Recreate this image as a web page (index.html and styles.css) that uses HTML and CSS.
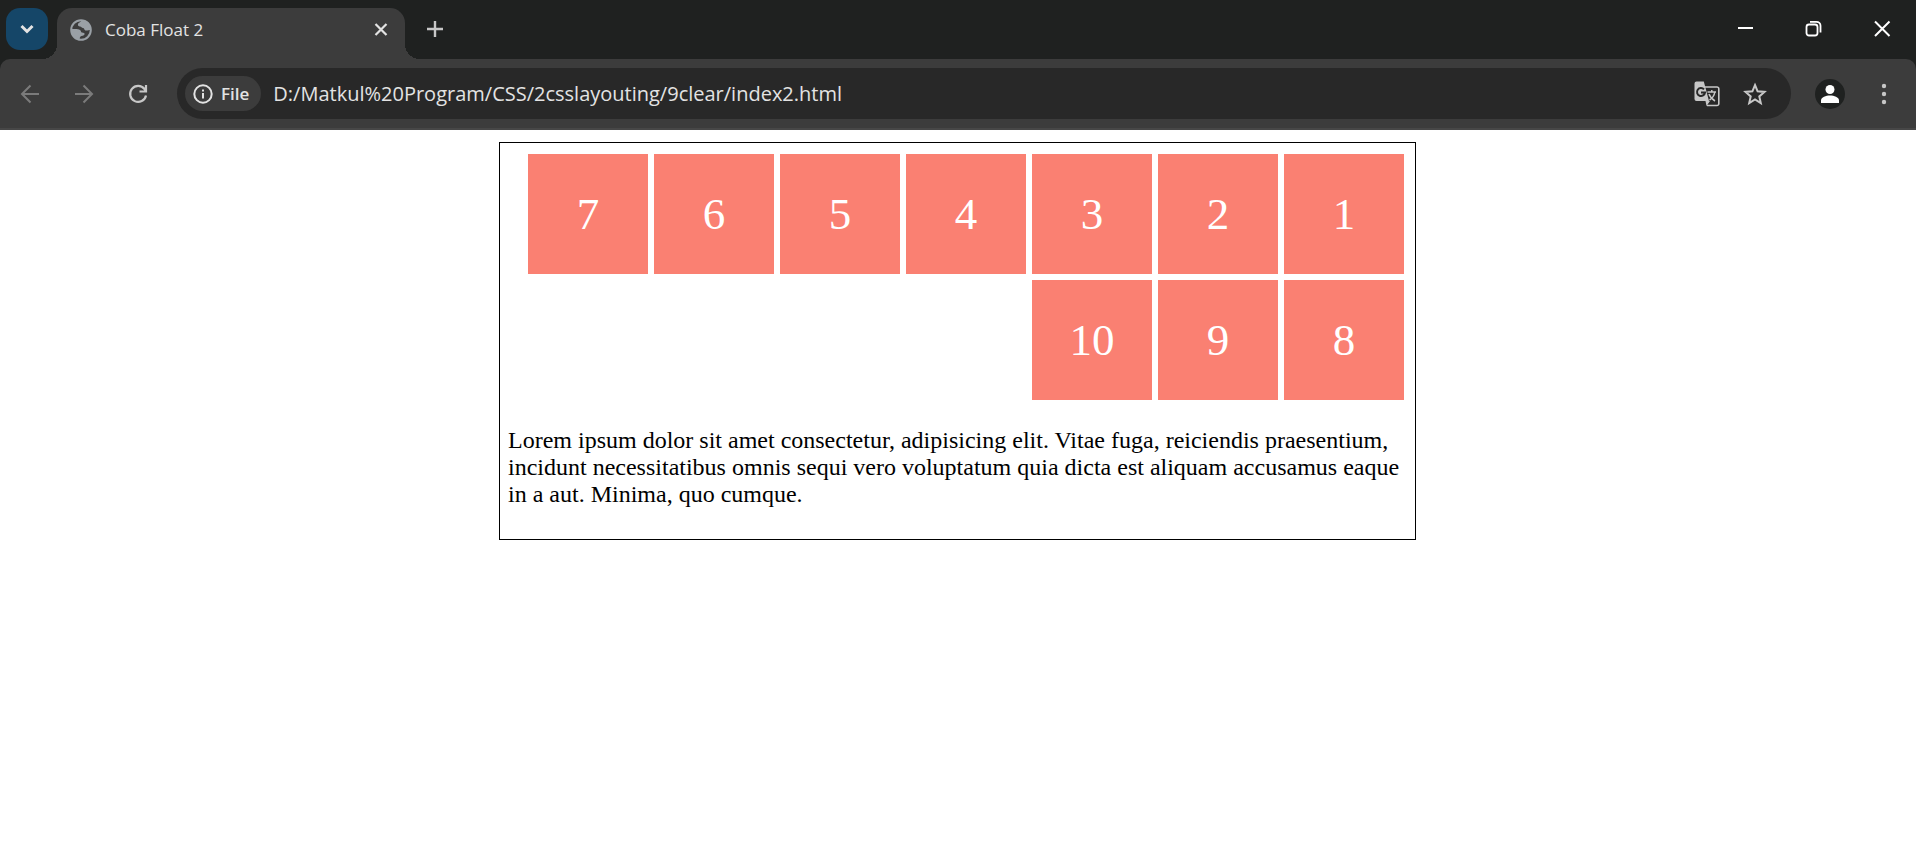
FILE: index.html
```
<!DOCTYPE html>
<html lang="en">
<head>
<meta charset="utf-8">
<title>Coba Float 2</title>
<link rel="stylesheet" href="styles.css">
</head>
<body>
<header class="browser">
  <div class="tabstrip">
    <button class="tab-search" aria-label="Search tabs">
      <svg width="42" height="42" viewBox="0 0 42 42" fill="none" stroke="#e3e3e3" stroke-width="3"><path d="M15.500 18l5.500 5.500 5.500-5.500"/></svg>
    </button>
    <div class="tab">
      <svg class="favicon" width="22" height="22" viewBox="0 0 22 22"><circle cx="11" cy="11" r="9.800" fill="none" stroke="#9aa0a6" stroke-width="2"/><path fill="#9aa0a6" d="M12 1C11 3 8.500 3.500 8 5s.5 2.500 2 2.500 1.500 1.500 3 1.500 1 2.500 3 2.500 3-.5 5-.5C21 5 17 1 12 1zM1 10c3 .3 7-.5 9 1 1.500 1.200.5 2.200 2 2.500s3 .5 2.500 2-3 1-4 2-.5 2-1 3C4 20 1 16 1 10z"/></svg>
      <span class="tab-title">Coba Float 2</span>
      <button class="icon-button tab-close" aria-label="Close tab">
        <svg width="20" height="20" viewBox="0 0 20 20" stroke="#e3e3e3" stroke-width="2.200"><path d="M4.500 4l11 11m0-11l-11 11"/></svg>
      </button>
    </div>
    <button class="icon-button new-tab" aria-label="New tab">
      <svg width="20" height="20" viewBox="0 0 20 20" stroke="#c7c7c7" stroke-width="2.400"><path d="M2 11h16M10 3v16"/></svg>
    </button>
    <div class="window-controls">
      <button class="icon-button" aria-label="Minimize"><svg width="20" height="20" viewBox="0 0 20 20" stroke="#fff" stroke-width="2"><path d="M2 10h15"/></svg></button>
      <button class="icon-button" aria-label="Restore"><svg width="20" height="20" viewBox="0 0 20 20" fill="none" stroke="#fff" stroke-width="1.800"><rect x="2.500" y="6.500" width="11" height="11" rx="2.500"/><path d="M6 3.800h6.500a4 4 0 0 1 4 4V14.500"/></svg></button>
      <button class="icon-button" aria-label="Close"><svg width="20" height="20" viewBox="0 0 20 20" stroke="#fff" stroke-width="2"><path d="M3 3.500l14.500 14.500m0-14.500l-14.500 14.500"/></svg></button>
    </div>
  </div>
  <div class="toolbar">
    <nav class="navigation" aria-label="Navigation">
      <button class="icon-button" aria-label="Back"><svg width="24" height="24" viewBox="0 0 24 24" fill="none" stroke="#7b7b7b" stroke-width="2"><path d="M21 12H4.500M12.500 3.500L4 12l8.500 8.500"/></svg></button>
      <button class="icon-button" aria-label="Forward"><svg width="24" height="24" viewBox="0 0 24 24" fill="none" stroke="#7b7b7b" stroke-width="2"><path d="M3 12h16.500M11.500 3.500L20 12l-8.500 8.500"/></svg></button>
      <button class="icon-button" aria-label="Reload"><svg width="24" height="24" viewBox="0 0 24 24" fill="none" stroke="#c7c7c7" stroke-width="2.200"><path d="M20 13.500A8 8 0 1 1 18.500 7l1.500 2M20 3v6.500h-6.500"/></svg></button>
    </nav>
    <div class="omnibox">
      <button class="site-chip">
        <svg width="20" height="20" viewBox="0 0 20 20" fill="none" stroke="#e3e3e3" stroke-width="2"><circle cx="10" cy="10" r="8.700"/><path d="M10 9v5.500M10 5.500v2"/></svg>
        <span>File</span>
      </button>
      <input class="url" type="text" aria-label="Address" value="D:/Matkul%20Program/CSS/2csslayouting/9clear/index2.html">
      <button class="icon-button" aria-label="Translate this page">
        <svg width="26" height="26" viewBox="0 0 26 26" fill="none"><path d="M11 6h12a1.800 1.800 0 0 1 1.800 1.800v14.900a1.800 1.800 0 0 1-1.800 1.800H13" stroke="#c7c7c7" stroke-width="1.600"/><path d="M2.500 .5h7.300l5.200 19.500H2.500A2 2 0 0 1 .5 18V2.500A2 2 0 0 1 2.500.5zM11.500 20h4.500l-3.500 5z" fill="#c7c7c7"/><path d="M10 8.300a4 4 0 1 0 1 3.200H7" stroke="#282828" stroke-width="2"/><path d="M13.500 11h8.500M17.800 9v2M20.800 11c-.5 3.500-3 6.500-5.300 8M15 13c1 3 3.500 5.500 6 7" stroke="#c7c7c7" stroke-width="1.500"/></svg>
      </button>
      <button class="icon-button" aria-label="Bookmark this tab">
        <svg width="24" height="24" viewBox="0 0 24 24" fill="none" stroke="#c7c7c7" stroke-width="2"><path d="M12 3l2.600 6.300 6.900.6-5.200 4.500 1.500 6.700L12 17.500l-5.800 3.600 1.500-6.700-5.200-4.500 6.900-.6z"/></svg>
      </button>
    </div>
    <button class="icon-button profile" aria-label="Profile">
      <svg width="30" height="30" viewBox="0 0 30 30" fill="#fff"><circle cx="15" cy="15" r="15" fill="#1f2120"/><circle cx="15" cy="10.500" r="4.500"/><path d="M6 24v-2.500C6 18 11 16.500 15 16.500s9 1.500 9 5V24z"/></svg>
    </button>
    <button class="icon-button" aria-label="Menu">
      <svg width="24" height="24" viewBox="0 0 24 24" fill="#c7c7c7"><circle cx="12" cy="4" r="2.200"/><circle cx="12" cy="12" r="2.200"/><circle cx="12" cy="20" r="2.200"/></svg>
    </button>
  </div>
</header>
<div class="page">
  <main class="container">
    <div class="boxes">
      <div class="box">1</div>
      <div class="box">2</div>
      <div class="box">3</div>
      <div class="box">4</div>
      <div class="box">5</div>
      <div class="box">6</div>
      <div class="box">7</div>
      <div class="box">8</div>
      <div class="box">9</div>
      <div class="box">10</div>
    </div>
    <p class="text">Lorem ipsum dolor sit amet consectetur, adipisicing elit. Vitae fuga, reiciendis praesentium, incidunt necessitatibus omnis sequi vero voluptatum quia dicta est aliquam accusamus eaque in a aut. Minima, quo cumque.</p>
  </main>
</div>
</body>
</html>
```
FILE: styles.css
```
* {
  box-sizing: border-box;
}

body {
  margin: 0;
  background: #fff;
  color: #000;
  font-family: "Liberation Serif", "Times New Roman", serif;
}

button {
  padding: 0;
  border: 0;
  background: none;
  color: inherit;
  font: inherit;
}

svg {
  display: block;
}

.browser {
  background: #1f2120;
  color: #e3e3e3;
  font-family: "Open Sans", "Noto Sans", sans-serif;
}

.tabstrip {
  display: flex;
  height: 59px;
  padding: 8px 0 0 6px;
}

.tab-search {
  width: 42px;
  height: 42px;
  border-radius: 14px;
  background: #154668;
}

.tab {
  position: relative;
  display: flex;
  align-items: center;
  width: 348px;
  margin-left: 9px;
  padding: 0 14px 8px 13px;
  border-radius: 15px 15px 0 0;
  background: #3c3c3c;
}

.tab::before,
.tab::after {
  content: "";
  position: absolute;
  bottom: 0;
  width: 15px;
  height: 15px;
}

.tab::before {
  right: 100%;
  background: radial-gradient(circle at 0 0, transparent 15px, #3c3c3c 15px);
}

.tab::after {
  left: 100%;
  background: radial-gradient(circle at 100% 0, transparent 15px, #3c3c3c 15px);
}

.tab-title {
  flex: 1;
  margin-left: 13px;
  font-size: 17px;
  line-height: 24px;
}

.icon-button {
  display: grid;
  flex: none;
  place-items: center;
}

.new-tab {
  width: 30px;
  height: 42px;
  margin-left: 15px;
}

.new-tab svg,
.window-controls svg {
  margin-bottom: 2px;
}

.window-controls {
  display: flex;
  margin-left: auto;
}

.window-controls .icon-button {
  width: 68px;
  height: 42px;
}

.toolbar {
  display: flex;
  align-items: center;
  padding: 9px 20px 9px 18px;
  border-bottom: 2px solid #474747;
  border-radius: 10px 10px 0 0;
  background: #3c3c3c;
}

.navigation {
  display: flex;
  gap: 30px;
}

.omnibox {
  display: flex;
  flex: 1;
  align-items: center;
  gap: 23px;
  height: 51px;
  margin: 0 24px 0 27px;
  padding: 0 24px 0 8px;
  border-radius: 26px;
  background: #282828;
}

.site-chip {
  display: flex;
  align-items: center;
  gap: 8px;
  height: 35px;
  padding: 0 12px 0 8px;
  border-radius: 18px;
  background: #3c3c3c;
  font-size: 17px;
  font-weight: 600;
}

.url {
  flex: 1;
  min-width: 0;
  margin-left: -11px;
  padding: 0;
  border: 0;
  outline: 0;
  background: none;
  color: #e3e3e3;
  font-family: inherit;
  font-size: 20px;
  line-height: 28px;
}

.profile {
  margin-right: 27px;
}

.page {
  padding: 12px 1px 12px 0;
}

.container {
  max-width: 917px;
  margin: 0 auto;
  padding: 8px 8px 7px;
  border: 1px solid #000;
}

.boxes {
  display: flex;
  flex-flow: row-reverse wrap;
}

.box {
  width: 120px;
  margin: 3px;
  background: salmon;
  color: #fff;
  font-size: 45px;
  line-height: 120px;
  text-align: center;
}

.text {
  margin: 24px 0;
  font-size: 24px;
  line-height: 27px;
}
```
